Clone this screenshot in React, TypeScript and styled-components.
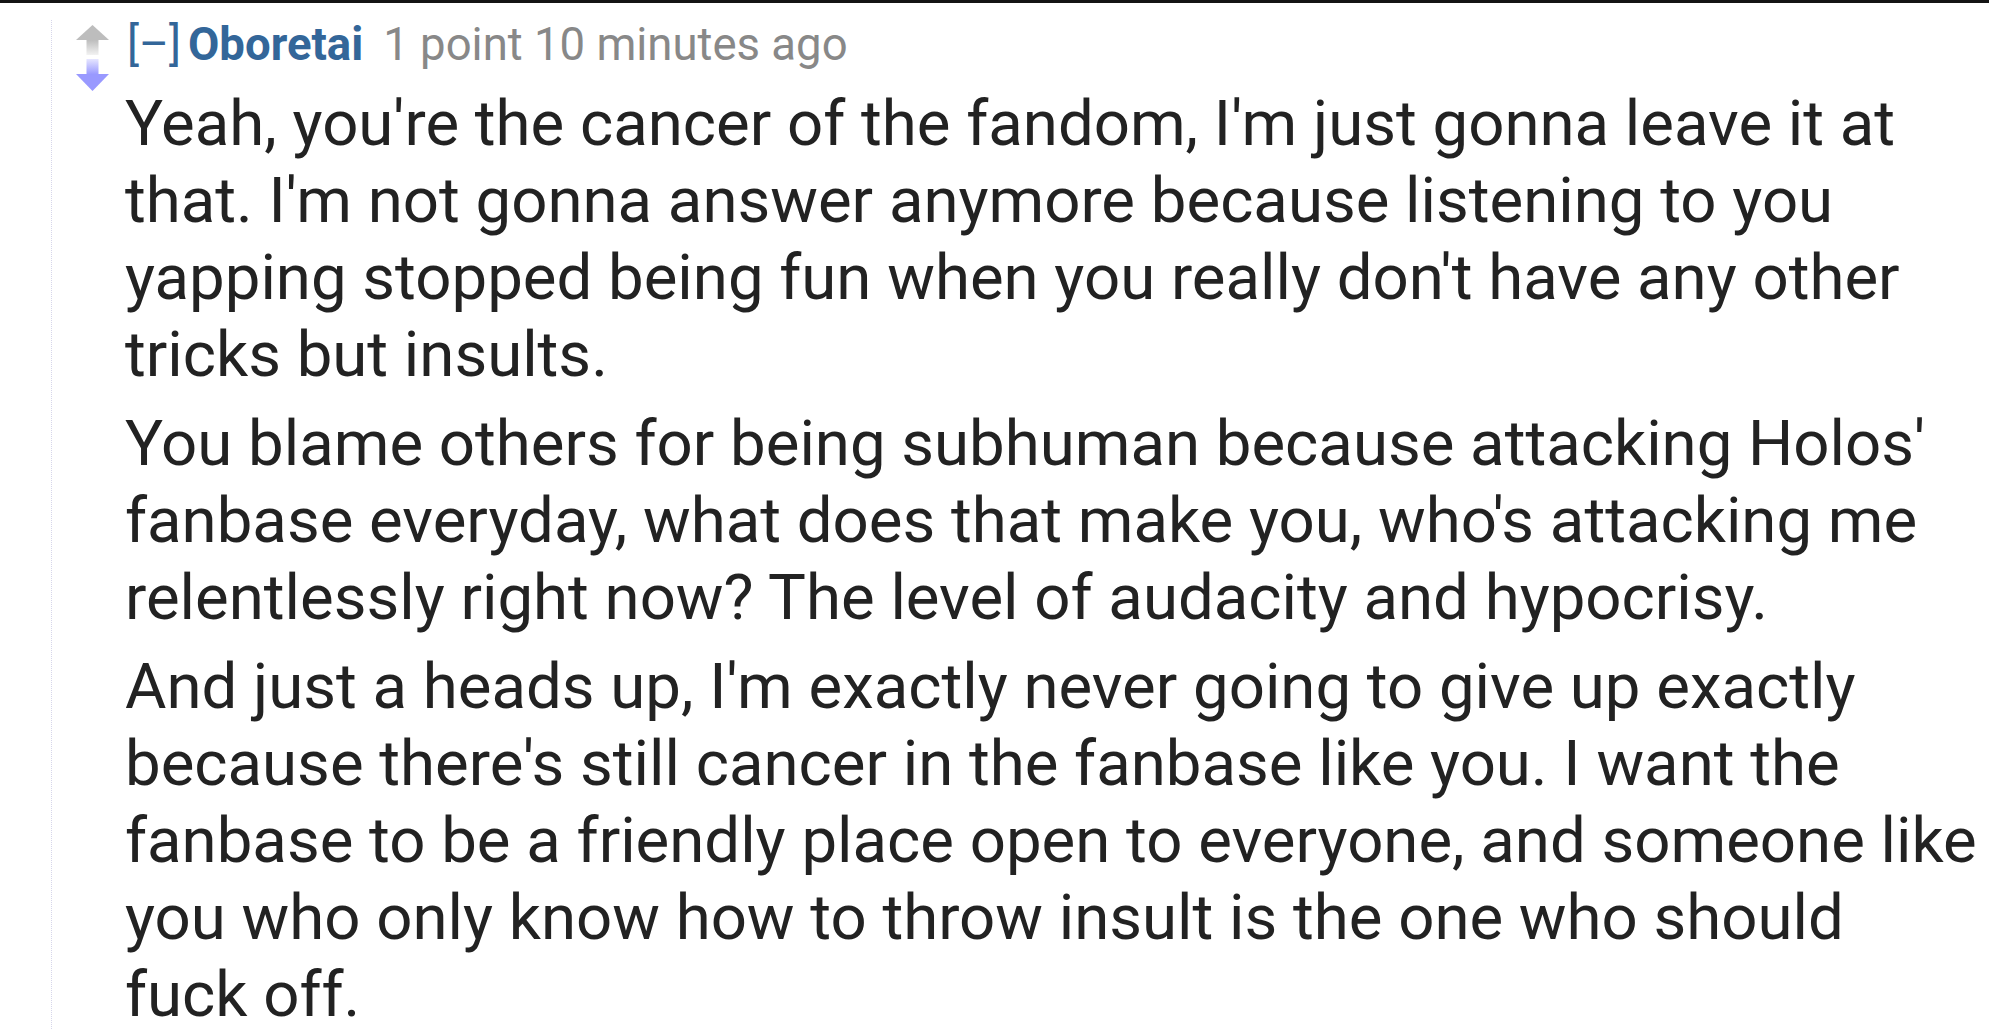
import React from "react";
import styled, { createGlobalStyle } from "styled-components";

const GlobalStyle = createGlobalStyle`
  html, body {
    margin: 0;
    padding: 0;
    background: #ffffff;
  }
  body {
    font-family: Roboto, "Noto Sans", "Liberation Sans", sans-serif;
    overflow: hidden;
  }
`;

const Page = styled.div`
  width: 1989px;
  height: 1030px;
  background: #ffffff;
  display: flex;
  flex-direction: column;
`;

const TopBar = styled.div`
  height: 3px;
  background: #141414;
  flex: none;
`;

const Comment = styled.div`
  margin-top: 17px;
  margin-left: 51px;
  border-left: 1px dotted #d6d6ea;
  display: flex;
  align-items: flex-start;
  flex: 1;
`;

const Votes = styled.div`
  margin-top: 5px;
  margin-left: 24px;
  width: 33px;
  flex: none;
  display: flex;
`;

const Entry = styled.div`
  margin-left: 16px;
  display: flex;
  flex-direction: column;
`;

const Tagline = styled.div`
  font-size: 45.5px;
  line-height: 50px;
  white-space: nowrap;
  display: flex;
  align-items: baseline;
`;

const Expand = styled.span`
  color: #336699;
  margin-left: 2px;
`;

const Author = styled.span`
  color: #336699;
  font-weight: 700;
  margin-left: 7px;
`;

const Meta = styled.span`
  color: #888888;
  margin-left: 20px;
`;

const Body = styled.div`
  margin-top: 15px;
  display: flex;
  flex-direction: column;
  gap: 12px;
`;

const Para = styled.p`
  margin: 0;
  font-size: 63.5px;
  line-height: 77px;
  color: #222222;
  white-space: nowrap;
`;

const Arrows = () => (
  <svg width="33" height="66" viewBox="0 0 33 66">
    <defs>
      <linearGradient id="upg" x1="0" y1="0" x2="0" y2="1">
        <stop offset="0" stopColor="#bdbdbd" />
        <stop offset="1" stopColor="#f2f2f2" />
      </linearGradient>
      <linearGradient id="downg" x1="0" y1="0" x2="0" y2="1">
        <stop offset="0" stopColor="#e6e6ff" />
        <stop offset="1" stopColor="#9b9bff" />
      </linearGradient>
    </defs>
    <polygon points="0,15 16.5,0 33,15" fill="#bdbdbd" />
    <rect x="10.5" y="15" width="12" height="15" fill="url(#upg)" />
    <rect x="10.5" y="34" width="12" height="15" fill="url(#downg)" />
    <polygon points="0,49 33,49 16.5,66" fill="#9999ff" />
  </svg>
);

const paragraphs: string[][] = [
  [
    "Yeah, you're the cancer of the fandom, I'm just gonna leave it at",
    "that. I'm not gonna answer anymore because listening to you",
    "yapping stopped being fun when you really don't have any other",
    "tricks but insults.",
  ],
  [
    "You blame others for being subhuman because attacking Holos'",
    "fanbase everyday, what does that make you, who's attacking me",
    "relentlessly right now? The level of audacity and hypocrisy.",
  ],
  [
    "And just a heads up, I'm exactly never going to give up exactly",
    "because there's still cancer in the fanbase like you. I want the",
    "fanbase to be a friendly place open to everyone, and someone like",
    "you who only know how to throw insult is the one who should",
    "fuck off.",
  ],
];

export default function App() {
  return (
    <Page>
      <GlobalStyle />
      <TopBar />
      <Comment>
        <Votes>
          <Arrows />
        </Votes>
        <Entry>
          <Tagline>
            <Expand>[–]</Expand>
            <Author>Oboretai</Author>
            <Meta>1 point 10 minutes ago</Meta>
          </Tagline>
          <Body>
            {paragraphs.map((lines, i) => (
              <Para key={i}>
                {lines.map((l, j) => (
                  <React.Fragment key={j}>
                    {l}
                    {j < lines.length - 1 && <br />}
                  </React.Fragment>
                ))}
              </Para>
            ))}
          </Body>
        </Entry>
      </Comment>
    </Page>
  );
}
